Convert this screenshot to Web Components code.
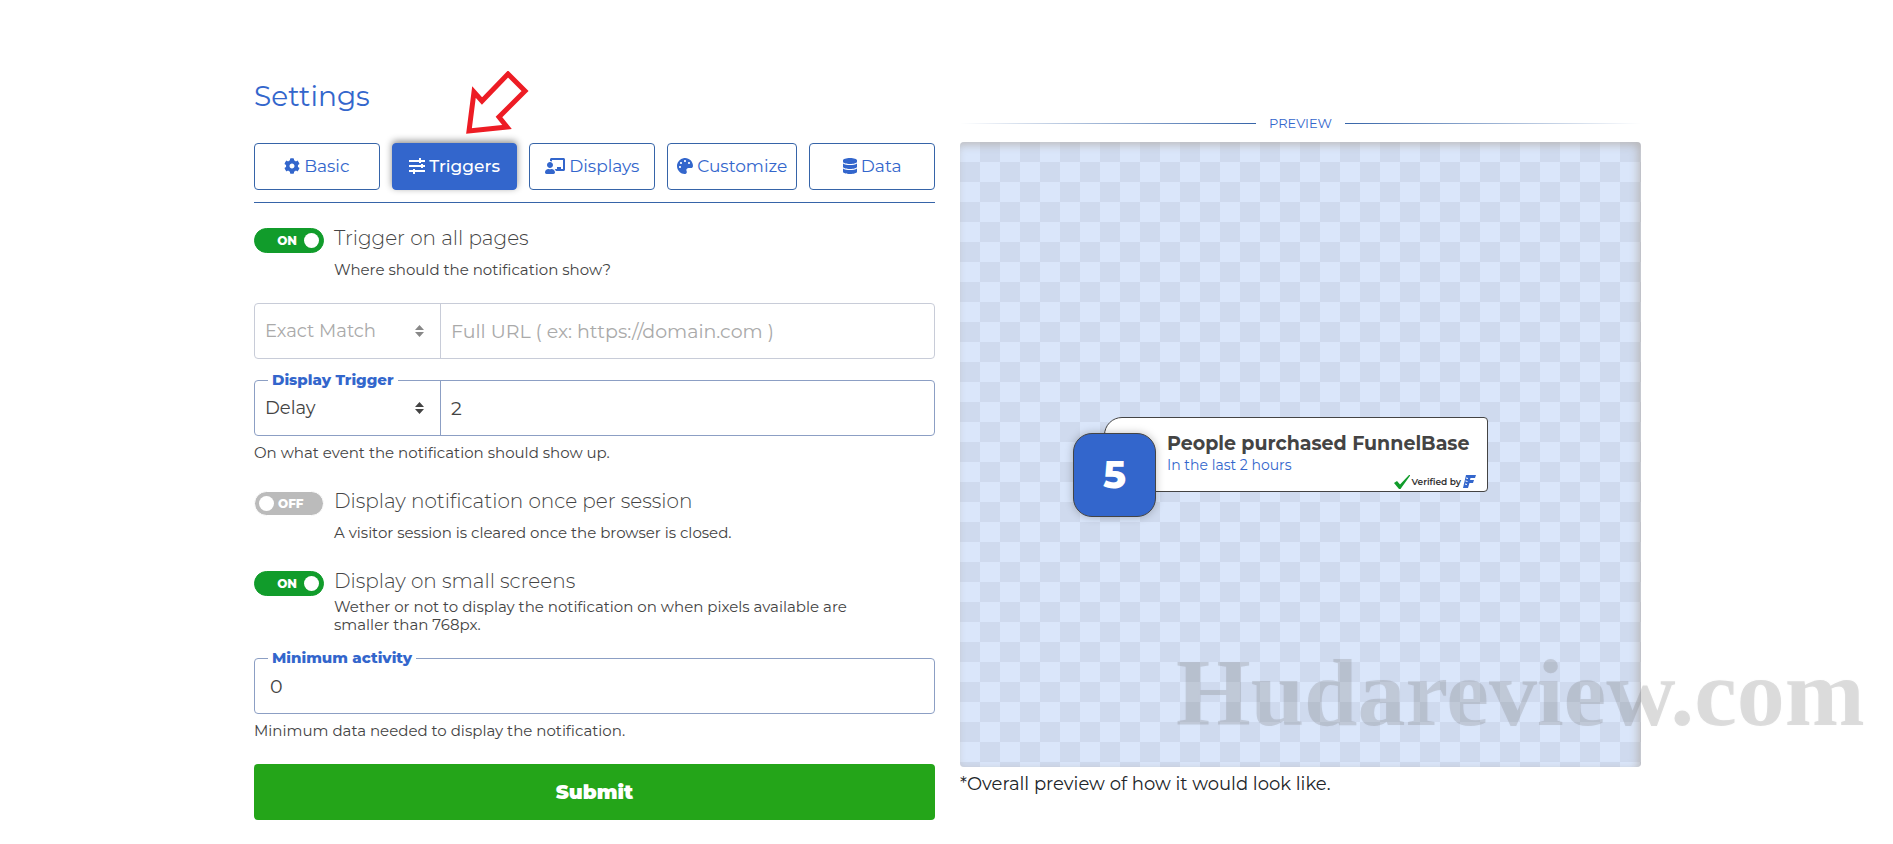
<!DOCTYPE html>
<html lang="en">
<head>
<meta charset="utf-8">
<title>Settings</title>
<style>
  body {
    margin: 0;
    background: #fff;
    color: #333;
    font-family: Montserrat, Inter, "Open Sans", sans-serif;
  }
</style>
</head>
<body>
<settings-layout>
  <settings-form slot="form"></settings-form>
  <preview-pane slot="preview">
    <purchase-notice count="5">
      People purchased FunnelBase
      <span slot="when">In the last 2 hours</span>
    </purchase-notice>
  </preview-pane>
</settings-layout>

<script>
const ICONS = {
  cog: ['0 0 512 512', '<path d="M487.4 315.7l-42.6-24.6c4.3-23.2 4.3-47 0-70.2l42.6-24.6c4.9-2.8 7.1-8.6 5.5-14-11.1-35.6-30-67.8-54.7-94.6-3.8-4.1-10-5.1-14.8-2.3L380.8 110c-17.9-15.4-38.5-27.3-60.8-35.1V25.8c0-5.6-3.9-10.5-9.4-11.7-36.7-8.2-74.3-7.8-109.2 0-5.5 1.2-9.4 6.1-9.4 11.7V75c-22.2 7.9-42.8 19.8-60.8 35.1L88.7 85.5c-4.9-2.8-11-1.9-14.8 2.3-24.7 26.7-43.6 58.9-54.7 94.6-1.7 5.4.6 11.2 5.5 14L67.3 221c-4.3 23.2-4.3 47 0 70.2l-42.6 24.6c-4.9 2.8-7.1 8.6-5.5 14 11.1 35.6 30 67.8 54.7 94.6 3.8 4.1 10 5.1 14.8 2.3l42.6-24.6c17.9 15.4 38.5 27.3 60.8 35.1v49.2c0 5.6 3.9 10.5 9.4 11.7 36.7 8.2 74.3 7.8 109.2 0 5.5-1.2 9.4-6.1 9.4-11.7v-49.2c22.2-7.9 42.8-19.8 60.8-35.1l42.6 24.6c4.9 2.8 11 1.9 14.8-2.3 24.7-26.7 43.6-58.9 54.7-94.6 1.5-5.5-.7-11.3-5.6-14.1zM256 336c-44.1 0-80-35.9-80-80s35.9-80 80-80 80 35.9 80 80-35.9 80-80 80z"/>'],
  sliders: ['0 0 16 16', '<path d="M0 2h16v2H0zM0 7h16v2H0zM0 12h16v2H0zM10 0h2v5h-2zM12 6h2v4h-2zM4 11h2v5H4z"/>'],
  teacher: ['0 0 640 512', '<path d="M208 352c-2.39 0-4.78.35-7.06 1.09C187.98 357.3 174.35 360 160 360c-14.35 0-27.98-2.7-40.95-6.91-2.28-.74-4.66-1.09-7.05-1.09C49.94 352-.33 402.48 0 464.62.14 490.88 21.73 512 48 512h224c26.27 0 47.86-21.12 48-47.38.33-62.14-49.94-112.62-112-112.62zm-48-32c53.02 0 96-42.98 96-96s-42.98-96-96-96-96 42.98-96 96 42.98 96 96 96zM592 0H208c-26.47 0-48 22.25-48 49.59V96c23.42 0 45.1 6.78 64 17.8V64h352v288h-64v-64H384v64h-76.24c19.1 16.69 33.12 38.73 39.69 64H592c26.47 0 48-22.25 48-49.59V49.59C640 22.25 618.47 0 592 0z"/>'],
  palette: ['0 0 512 512', '<path d="M204.3 5C104.9 24.4 24.8 104.3 5.2 203.4c-37 187 131.7 326.4 258.8 306.7 41.2-6.4 61.4-54.6 42.5-91.7-23.1-45.4 9.9-98.4 60.9-98.4h79.7c35.8 0 64.8-29.6 64.9-65.3C511.5 97.1 368.1-26.9 204.3 5zM96 320c-17.7 0-32-14.3-32-32s14.3-32 32-32 32 14.3 32 32-14.3 32-32 32zm32-128c-17.7 0-32-14.3-32-32s14.3-32 32-32 32 14.3 32 32-14.3 32-32 32zm128-64c-17.7 0-32-14.3-32-32s14.3-32 32-32 32 14.3 32 32-14.3 32-32 32zm128 64c-17.7 0-32-14.3-32-32s14.3-32 32-32 32 14.3 32 32-14.3 32-32 32z"/>'],
  database: ['0 0 448 512', '<path d="M448 73.143v45.714C448 159.143 347.667 192 224 192S0 159.143 0 118.857V73.143C0 32.857 100.333 0 224 0s224 32.857 224 73.143zM448 176v102.857C448 319.143 347.667 352 224 352S0 319.143 0 278.857V176c48.125 33.143 136.208 48.572 224 48.572S399.874 209.143 448 176zm0 160v102.857C448 479.143 347.667 512 224 512S0 479.143 0 438.857V336c48.125 33.143 136.208 48.572 224 48.572S399.874 369.143 448 336z"/>']
};

// Two columns: the form and the preview
class SettingsLayout extends HTMLElement {
  constructor() {
    super();
    this.attachShadow({ mode: 'open' });
    this.shadowRoot.innerHTML = `
      <style>
        :host {
          display: grid;
          grid-template-columns: repeat(2, minmax(0, 1fr));
          gap: 25px;
          max-width: 1387px;
          margin: 0 auto;
          padding: 80px 15px 20px 17px;
        }
      </style>
      <slot name="form"></slot>
      <slot name="preview"></slot>
    `;
  }
}
customElements.define('settings-layout', SettingsLayout);

class SettingsTab extends HTMLElement {
  constructor() {
    super();
    this.attachShadow({ mode: 'open' });
  }

  connectedCallback() {
    const [viewBox, shape] = ICONS[this.getAttribute('icon')];
    this.shadowRoot.innerHTML = `
      <style>
        :host { display: block; flex: 1 1 0; position: relative; }
        button {
          display: flex;
          align-items: center;
          justify-content: center;
          gap: 4px;
          box-sizing: border-box;
          width: 100%;
          height: 47px;
          padding: 0 9px 2px;
          border: 1px solid #3664a8;
          border-radius: 4px;
          background: #fff;
          color: #3366cc;
          font: 400 17px/24px Montserrat, Inter, sans-serif;
          cursor: pointer;
        }
        :host([active]) button {
          border-color: #3366cc;
          background: #3366cc;
          color: #fff;
          font-weight: 500;
          box-shadow: 0 -2px 7px rgba(0, 0, 0, .45);
        }
        svg { height: 16px; fill: currentColor; }
      </style>
      <button type="button"><svg viewBox="${viewBox}" aria-hidden="true">${shape}</svg><slot></slot></button>
      <slot name="pointer"></slot>
    `;
  }
}
customElements.define('settings-tab', SettingsTab);

class PointerArrow extends HTMLElement {
  constructor() {
    super();
    this.attachShadow({ mode: 'open' });
    this.shadowRoot.innerHTML = `
      <style>
        :host { position: absolute; left: 73px; bottom: 55px; width: 64px; height: 64px; }
        svg { display: block; }
      </style>
      <svg width="64" height="64" viewBox="0 0 64 64" aria-hidden="true">
        <path d="M4 60L9 21l8 9 26-27 17 17-26 26 8 10z" fill="#fff" stroke="#ed1c24" stroke-width="5"/>
      </svg>
    `;
  }
}
customElements.define('pointer-arrow', PointerArrow);

class ToggleRow extends HTMLElement {
  constructor() {
    super();
    this.attachShadow({ mode: 'open' });
  }

  connectedCallback() {
    this.shadowRoot.innerHTML = `
      <style>
        :host {
          display: grid;
          grid-template-columns: 70px 1fr;
          column-gap: 10px;
          row-gap: 11px;
          color: #444;
        }
        :host([tight]) { row-gap: 5px; }
        .switch {
          display: flex;
          align-items: center;
          position: relative;
          grid-row: 1 / span 2;
          box-sizing: border-box;
          height: 25px;
          margin-top: 2px;
          padding: 0 4px;
          border-radius: 13px;
          background: #bbb;
          border: 1px solid #fff;
          color: #fff;
          font-size: 12px;
          font-weight: 800;
        }
        .switch::before {
          content: "";
          width: 15px;
          height: 15px;
          border-radius: 50%;
          background: #fff;
        }
        .switch span { margin-left: 4px; }
        .switch:has(:checked) {
          flex-direction: row-reverse;
          border-color: #119c2b;
          background: #119c2b;
        }
        .switch:has(:checked) span { margin: 0 7px 0 0; }
        input { position: absolute; inset: 0; margin: 0; opacity: 0; }
        label { font-size: 20px; line-height: 24px; font-weight: 300; }
        .help { grid-column: 2; font-size: 15px; line-height: 18px; padding-right: 60px; }
      </style>
      <div class="switch"><input type="checkbox" role="switch" id="toggle"><span></span></div>
      <label for="toggle"><slot></slot></label>
      <div class="help"><slot name="help"></slot></div>
    `;
    this.input = this.shadowRoot.querySelector('input');
    this.input.checked = this.hasAttribute('on');
    this.input.addEventListener('change', () => this.render());
    this.render();
  }

  render() {
    this.shadowRoot.querySelector('span').textContent = this.input.checked ? 'ON' : 'OFF';
  }
}
customElements.define('toggle-row', ToggleRow);

// Text box, with a drop-down in front of it when "option" is set
class FieldGroup extends HTMLElement {
  constructor() {
    super();
    this.attachShadow({ mode: 'open' });
  }

  connectedCallback() {
    const label = this.getAttribute('label');
    const option = this.getAttribute('option');
    const off = this.hasAttribute('disabled') ? 'disabled' : '';
    this.shadowRoot.innerHTML = `
      <style>
        :host { display: block; color: #444; --line: #8c9fc4; --text: #444; }
        :host([disabled]) { --line: #c8ccd8; --text: #aaa; }
        .box {
          display: flex;
          position: relative;
          box-sizing: border-box;
          height: 56px;
          border: 1px solid var(--line);
          border-radius: 4px;
        }
        .pick {
          display: grid;
          align-items: center;
          flex: 0 0 186px;
          box-sizing: border-box;
          border-right: 1px solid var(--line);
        }
        .pick > * { grid-area: 1 / 1; }
        select, input {
          appearance: none;
          box-sizing: border-box;
          width: 100%;
          height: 100%;
          border: 0;
          background: none;
          color: var(--text);
          opacity: 1;
          padding: 0 10px;
          font: 400 18px/24px Montserrat, Inter, sans-serif;
        }
        input { flex: 1; min-width: 0; font-size: 19px; }
        .only { padding: 0 15px; }
        input::placeholder { color: #aaa; opacity: 1; }
        svg { justify-self: end; margin-right: 16px; fill: var(--text); pointer-events: none; }
        :host([disabled]) svg { fill: #888; }
        label {
          position: absolute;
          top: -10px;
          left: 13px;
          padding: 0 4px;
          background: #fff;
          color: #3366cc;
          font-size: 15px;
          line-height: 18px;
          font-weight: 800;
        }
        .help { margin-top: 8px; font-size: 15px; line-height: 18px; }
      </style>
      <div class="box">
        ${option ? `<div class="pick">
          <select id="${label ? 'field' : 'pick'}" aria-label="${label || 'Match type'}" ${off}><option>${option}</option></select>
          <svg width="9" height="12" viewBox="0 0 9 12" aria-hidden="true"><path d="M0 5l4.500-5L9 5zM0 7h9l-4.500 5z"/></svg>
        </div>` : ''}
        <input type="text" ${option ? 'aria-label="Value"' : 'id="field" class="only"'} ${off}>
        ${label ? `<label for="field">${label}</label>` : ''}
      </div>
      ${this.hasAttribute('help') ? `<div class="help">${this.getAttribute('help')}</div>` : ''}
    `;
    const input = this.shadowRoot.querySelector('input');
    input.value = this.getAttribute('value') || '';
    input.placeholder = this.getAttribute('placeholder') || '';
  }
}
customElements.define('field-group', FieldGroup);

class SettingsForm extends HTMLElement {
  constructor() {
    super();
    this.attachShadow({ mode: 'open' });
    this.shadowRoot.innerHTML = `
      <style>
        :host { display: block; }
        h1 { margin: 0 0 31px; color: #3366cc; font-size: 28px; line-height: 32px; font-weight: 400; }
        nav { display: flex; gap: 12px; padding-bottom: 12px; margin-bottom: 23px; border-bottom: 1px solid #3664a8; }
        toggle-row { margin-bottom: 24px; }
        field-group { margin-bottom: 21px; }
        field-group[help] { margin-bottom: 24px; }
        field-group + toggle-row, toggle-row + toggle-row { margin-top: 27px; }
        .submit {
          width: 100%;
          height: 56px;
          border: 0;
          border-radius: 4px;
          background: #24a519;
          color: #fff;
          font: 900 20px/24px Montserrat, Inter, sans-serif;
          cursor: pointer;
        }
      </style>
      <h1>Settings</h1>
      <nav>
        <settings-tab icon="cog">Basic</settings-tab>
        <settings-tab icon="sliders" active>Triggers<pointer-arrow slot="pointer"></pointer-arrow></settings-tab>
        <settings-tab icon="teacher">Displays</settings-tab>
        <settings-tab icon="palette">Customize</settings-tab>
        <settings-tab icon="database">Data</settings-tab>
      </nav>
      <toggle-row on>Trigger on all pages<span slot="help">Where should the notification show?</span></toggle-row>
      <field-group disabled option="Exact Match" placeholder="Full URL ( ex: https://domain.com )"></field-group>
      <field-group label="Display Trigger" option="Delay" value="2" help="On what event the notification should show up."></field-group>
      <toggle-row>Display notification once per session<span slot="help">A visitor session is cleared once the browser is closed.</span></toggle-row>
      <toggle-row on tight>Display on small screens<span slot="help">Wether or not to display the notification on when pixels available are smaller than 768px.</span></toggle-row>
      <field-group label="Minimum activity" value="0" help="Minimum data needed to display the notification."></field-group>
      <button class="submit" type="submit">Submit</button>
    `;
  }
}
customElements.define('settings-form', SettingsForm);

class PreviewPane extends HTMLElement {
  constructor() {
    super();
    this.attachShadow({ mode: 'open' });
    this.shadowRoot.innerHTML = `
      <style>
        :host { display: block; padding-top: 34px; }
        .title {
          display: flex;
          align-items: center;
          gap: 13px;
          margin-bottom: 10px;
          color: #3366cc;
          font-size: 13px;
          line-height: 18px;
        }
        .title::before, .title::after {
          content: "";
          flex: 1;
          height: 1px;
          background: linear-gradient(to right, transparent, #3664a8);
        }
        .title::after { background: linear-gradient(to left, transparent, #3664a8); }
        .stage {
          display: flex;
          align-items: center;
          justify-content: center;
          position: relative;
          height: 625px;
          border-radius: 4px;
          background: repeating-conic-gradient(#cfdaee 0 25%, #dae6fa 0 50%) 0 0 / 40px 40px;
          box-shadow: inset -3px 3px 8px rgba(170, 160, 150, .6);
        }
        .mark {
          position: absolute;
          left: 216px;
          bottom: 20px;
          color: rgba(120, 120, 120, .24);
          text-shadow: 0 0 2px rgba(120, 120, 120, .04);
          font: 700 96px/108px "Liberation Serif", serif;
        }
        .note { margin-top: 5px; color: #212529; font-size: 18px; line-height: 24px; }
      </style>
      <div class="title">PREVIEW</div>
      <div class="stage"><slot></slot><div class="mark">Hudareview.com</div></div>
      <div class="note">*Overall preview of how it would look like.</div>
    `;
  }
}
customElements.define('preview-pane', PreviewPane);

class PurchaseNotice extends HTMLElement {
  constructor() {
    super();
    this.attachShadow({ mode: 'open' });
  }

  connectedCallback() {
    this.shadowRoot.innerHTML = `
      <style>
        :host { display: flex; align-items: flex-start; margin: 24px 40px 0 0; }
        .count {
          display: flex;
          align-items: center;
          justify-content: center;
          position: relative;
          box-sizing: border-box;
          width: 83px;
          height: 84px;
          margin: 16px -52px 0 0;
          border: 1px solid #444;
          border-radius: 19px;
          background: #3366cc;
          box-shadow: 0 0 8px rgba(0, 0, 0, .25);
          color: #fff;
          font-size: 38px;
          font-weight: 800;
        }
        .card {
          box-sizing: border-box;
          width: 384px;
          height: 75px;
          padding: 14px 10px 0 62px;
          border: 1px solid #444;
          border-radius: 18px 4px 4px 4px;
          background: #fff;
        }
        .what { color: #444; font-size: 19px; line-height: 24px; font-weight: 700; white-space: nowrap; }
        .when { color: #3366cc; font-size: 14px; line-height: 18px; }
        .by {
          display: flex;
          align-items: center;
          justify-content: flex-end;
          gap: 2px;
          height: 16px;
          color: #333;
          font-size: 9px;
          font-weight: 600;
        }
      </style>
      <div class="count">${this.getAttribute('count')}</div>
      <div class="card">
        <div class="what"><slot></slot></div>
        <div class="when"><slot name="when"></slot></div>
        <div class="by">
          <svg width="16" height="14" viewBox="0 0 16 14" aria-hidden="true"><path d="M0 8l3-2 3 3.500L15 0h1.500L6.500 14H5z" fill="#119c2b"/></svg>
          <span>Verified by</span>
          <svg width="14" height="14" viewBox="0 0 14 14" aria-hidden="true"><path d="M3 0h10l-1 3H7.500L7 5h4l-1 3H6.500L5 13H0z" fill="#3366cc"/><path d="M3 3l2 .500M2.500 6l2 .500M2 9l2 .500" stroke="#fff"/></svg>
        </div>
      </div>
    `;
  }
}
customElements.define('purchase-notice', PurchaseNotice);
</script>
</body>
</html>
